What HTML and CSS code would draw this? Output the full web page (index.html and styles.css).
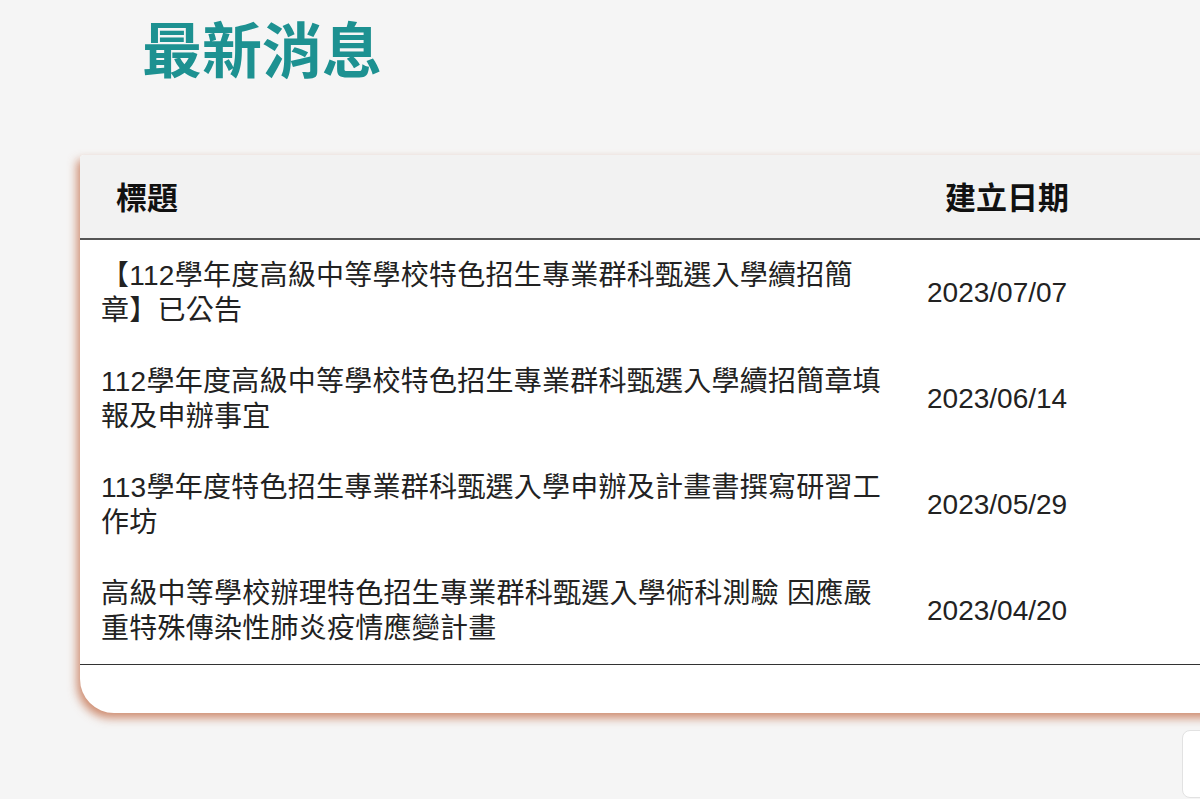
FILE: index.html
```html
<!DOCTYPE html>
<html lang="zh-Hant">
<head>
<meta charset="utf-8">
<title>最新消息</title>
<link rel="stylesheet" href="styles.css">
</head>
<body>
<main class="page">
  <h1 class="page-title">最新消息</h1>
  <section class="news-card">
    <table class="news-table">
      <colgroup>
        <col class="col-title">
        <col class="col-date">
      </colgroup>
      <thead>
        <tr>
          <th class="th-title">標題</th>
          <th class="th-date">建立日期</th>
        </tr>
      </thead>
      <tbody>
        <tr>
          <td class="td-title">【112學年度高級中等學校特色招生專業群科甄選入學續招簡章】已公告</td>
          <td class="td-date">2023/07/07</td>
        </tr>
        <tr>
          <td class="td-title">112學年度高級中等學校特色招生專業群科甄選入學續招簡章填報及申辦事宜</td>
          <td class="td-date">2023/06/14</td>
        </tr>
        <tr>
          <td class="td-title">113學年度特色招生專業群科甄選入學申辦及計畫書撰寫研習工作坊</td>
          <td class="td-date">2023/05/29</td>
        </tr>
        <tr>
          <td class="td-title">高級中等學校辦理特色招生專業群科甄選入學術科測驗 因應嚴重特殊傳染性肺炎疫情應變計畫</td>
          <td class="td-date">2023/04/20</td>
        </tr>
      </tbody>
    </table>
    <div class="card-foot"></div>
  </section>
  <div class="float-box"></div>
</main>
</body>
</html>
```

FILE: styles.css
```css
html, body {
  margin: 0;
  padding: 0;
}
body {
  background: #f5f5f5;
  overflow: hidden;
  height: 799px;
  font-family: "Liberation Sans", "Noto Sans CJK TC", sans-serif;
  color: #222;
}
.page {
  position: relative;
  padding: 11px 0 0 80px;
  height: 788px;
}
.page-title {
  margin: 0 0 72px 62px;
  font-family: "Noto Sans CJK TC", sans-serif;
  font-size: 60px;
  line-height: 72px;
  font-weight: 700;
  color: #1d9191;
  letter-spacing: 0;
}
.news-card {
  width: 1160px;
  background: #fff;
  border-radius: 4px 4px 4px 34px;
  box-shadow: -3px 5px 10px rgba(190, 95, 55, 0.7);
  overflow: hidden;
}
.news-table {
  width: 100%;
  border-collapse: collapse;
  table-layout: fixed;
}
.col-title {
  width: 829px;
}
.news-table thead th {
  background: #f2f2f2;
  font-family: "Noto Sans CJK TC", sans-serif;
  font-size: 31px;
  font-weight: 700;
  line-height: 38px;
  text-align: left;
  padding: 22px 0 23px 36px;
  color: #111;
  border-bottom: 2px solid #555;
}
.news-table tbody td {
  font-size: 28px;
  line-height: 35px;
  padding: 18px 26px 18px 21px;
  vertical-align: middle;
  color: #222;
}
.td-title {
  letter-spacing: 0.25px;
}
.news-table tbody tr:last-child td {
  border-bottom: 1px solid #333;
}
.news-table tbody td.td-date {
  padding: 16px 0 18px 18px;
}
.card-foot {
  height: 48px;
}
.float-box {
  position: absolute;
  left: 1182px;
  top: 730px;
  width: 60px;
  height: 66px;
  background: #fff;
  border: 1px solid #e2e2e2;
  border-radius: 8px;
}
```
